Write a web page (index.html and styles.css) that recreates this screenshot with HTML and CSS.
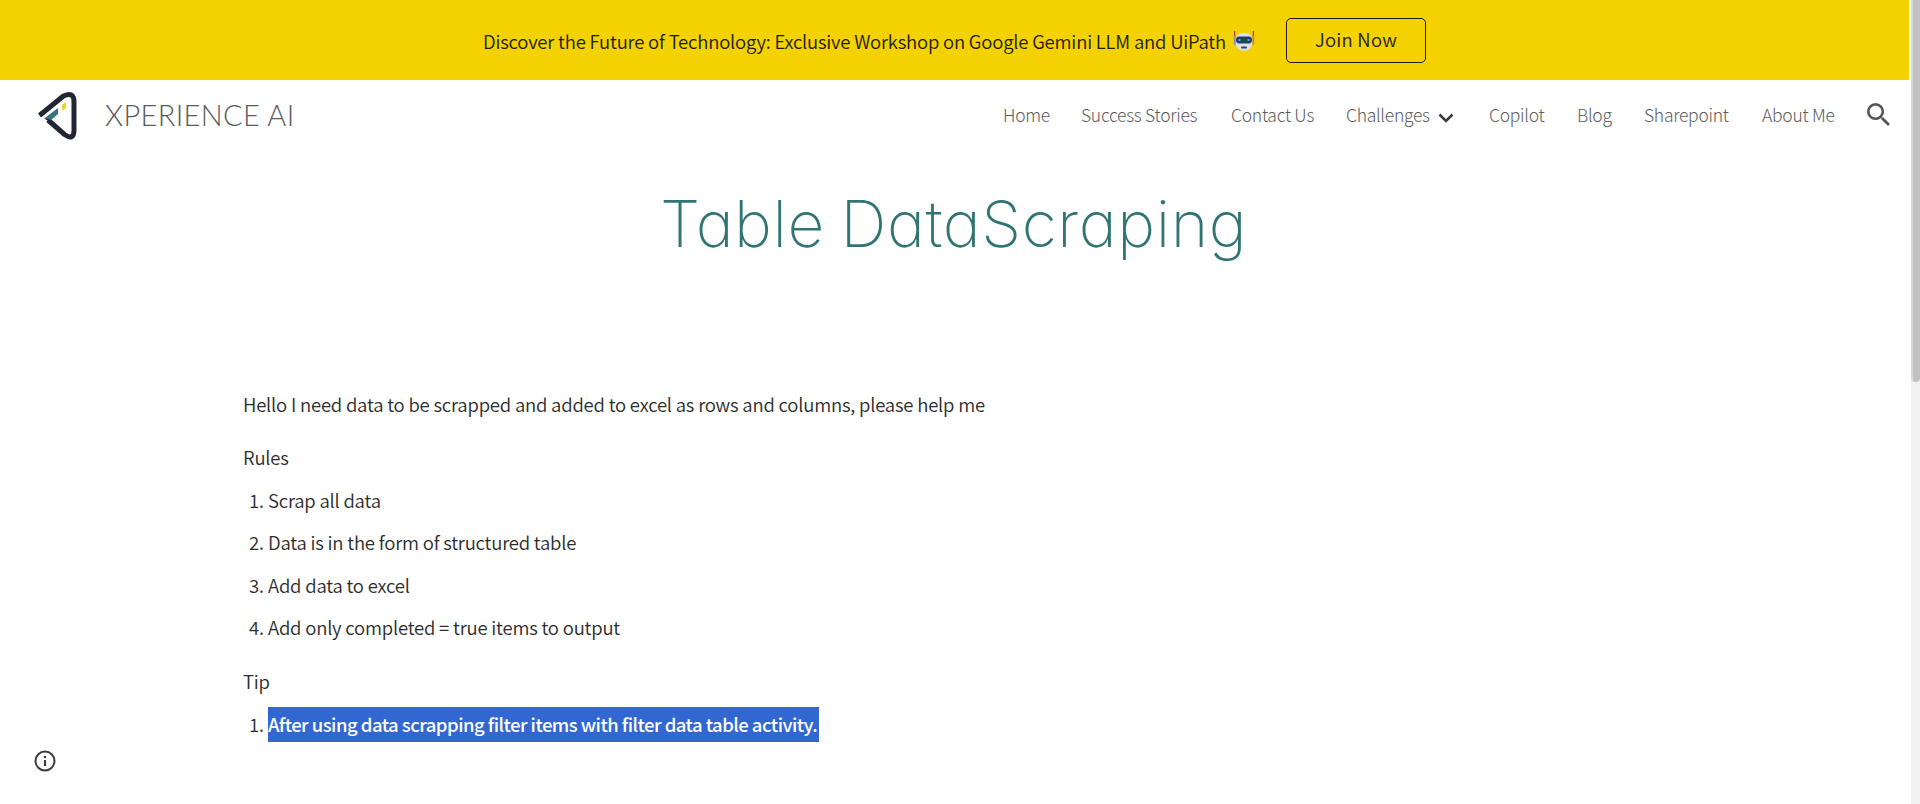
FILE: index.html
```html
<!DOCTYPE html>
<html lang="en">
<head>
<meta charset="utf-8">
<title>Table DataScraping</title>
<link rel="stylesheet" href="styles.css">
</head>
<body>
<div class="page">
  <div class="banner">
    <p class="banner-text"><span class="banner-copy">Discover the Future of Technology: Exclusive Workshop on Google Gemini LLM and UiPath</span>
      <svg class="robot" viewBox="0 0 22 22" aria-hidden="true">
        <path d="M1.6 1v14M20.4 1v14" stroke="#c43a3c" stroke-width="1.3"/>
        <path d="M1.6 6v9M20.4 6v9" stroke="#8b929b" stroke-width="1.3"/>
        <path d="M3 8Q4 3 11 3t8 5v6q0 6-8 7-8-1-8-7z" fill="#dce1e4"/>
        <rect x="3" y="6.5" width="16" height="7" rx="3.4" fill="#26377b"/>
        <rect x="6" y="7.6" width="10" height="4.8" rx="2.2" fill="#164c4a"/>
        <circle cx="6.5" cy="10" r="1.1" fill="#72a9dc"/><circle cx="15.5" cy="10" r="1.1" fill="#72a9dc"/>
        <rect x="8" y="16.5" width="6" height="2" rx="1" fill="#353e60"/>
      </svg>
    </p>
    <a class="join">Join Now</a>
  </div>
  <header class="header">
    <svg class="logo" viewBox="0 0 44 52" aria-hidden="true">
      <path d="M3.500 25.500L27.500 6q10.500-5 10.500 6v28q0 11-9.500 4.500L12 30" fill="none" stroke="#222632" stroke-width="5"/>
      <path d="M8.300 28.200L22 18v6L14 31z" fill="#35777a"/>
      <path d="M8.300 28.200L14 29.500 20 34v3z" fill="#222632"/>
      <path d="M26 15q4-4 4.200-1 .2 5-3.200 6.500-1.500-1-1-5.500z" fill="#efd323"/>
    </svg>
    <span class="site-name">XPERIENCE AI</span>
    <nav class="nav">
      <a class="n1">Home</a>
      <a class="n2">Success Stories</a>
      <a class="n3">Contact Us</a>
      <a class="n4">Challenges</a>
      <svg class="chevron" viewBox="0 0 16 10" aria-hidden="true"><path d="M1.500 1.500L8 8l6.500-6.500" fill="none" stroke="#3c3c3c" stroke-width="2.500"/></svg>
      <a class="n5">Copilot</a>
      <a class="n6">Blog</a>
      <a class="n7">Sharepoint</a>
      <a class="n8">About Me</a>
    </nav>
    <svg class="search" viewBox="3 3 17.500 17.500" aria-hidden="true"><path fill="#555" d="M15.500 14h-.79l-.28-.27A6.470 6.470 0 0 0 16 9.500 6.500 6.500 0 1 0 9.500 16c1.610 0 3.090-.59 4.230-1.570l.27.28v.79l5 4.990L20.490 19l-4.990-5zm-6 0C7.010 14 5 11.990 5 9.500S7.010 5 9.500 5 14 7.010 14 9.500 11.990 14 9.500 14z"/></svg>
  </header>
  <h1 class="title">Table DataScraping</h1>
  <main class="content">
    <p class="intro"><span class="intro-copy">Hello I need data to be scrapped and added to excel as rows and columns, please help me</span></p>
    <p class="label">Rules</p>
    <ul class="list">
      <li><span class="num">1.</span><span>Scrap all data</span></li>
      <li><span class="num">2.</span><span>Data is in the form of structured table</span></li>
      <li><span class="num">3.</span><span>Add data to excel</span></li>
      <li><span class="num">4.</span><span>Add only completed = true items to output</span></li>
    </ul>
    <p class="label">Tip</p>
    <ul class="list">
      <li><span class="num">1.</span><mark class="selected">After using data scrapping filter items with filter data table activity.</mark></li>
    </ul>
  </main>
  <svg class="info" viewBox="0 0 22 22" aria-hidden="true"><circle cx="11" cy="11" r="9.500" fill="none" stroke="#3c3c3c" stroke-width="2"/><path d="M11 10v6M11 6v2" stroke="#3c3c3c" stroke-width="2.200"/></svg>
</div>
<div class="scrollbar"><div class="thumb"></div></div>
</body>
</html>
```
FILE: styles.css
```css
* { box-sizing: border-box; }
body {
  margin: 0;
  width: 1920px;
  height: 804px;
  overflow: hidden;
  display: flex;
  background: #fff;
  color: #2c2c2c;
  font: 350 18.5px/24px "Noto Sans CJK SC", sans-serif;
  letter-spacing: -0.2px;
}
p, h1, ul { margin: 0; padding: 0; }
a, span, mark, h1 { white-space: nowrap; }
.page { width: 1909px; height: 804px; }
.banner {
  height: 80px;
  padding-left: 483px;
  display: flex;
  background: #f4d101;
  color: #211c08;
}
.banner-text { width: 803px; padding-top: 29px; display: flex; }
.banner-copy { width: 750px; letter-spacing: -0.2px; }
.robot { width: 22px; height: 22px; margin-top: 1px; }
.join {
  width: 140px;
  height: 45px;
  margin-top: 18px;
  border: 1px solid #211c08;
  border-radius: 5px;
  text-align: center;
  line-height: 41px;
  letter-spacing: 0.25px;
}
.header { height: 72px; padding-left: 36px; display: flex; }
.logo { width: 44px; height: 52px; margin-top: 10px; }
.site-name {
  width: 923px;
  padding: 17px 0 0 25px;
  font: 300 29px/36px Lato, sans-serif;
  letter-spacing: 0.35px;
  color: #5a5a5a;
}
.nav {
  width: 864px;
  padding-top: 23px;
  display: flex;
  color: #5c5c5c;
  font-size: 17.5px;
  font-weight: 300;
  letter-spacing: -0.28px;
}
.n1 { width: 78px; }
.n2 { width: 150px; }
.n3 { width: 115px; }
.n4 { width: 92px; }
.chevron { width: 16px; height: 10px; margin: 10px 35px 0 0; }
.n5 { width: 88px; }
.n6 { width: 67px; }
.n7 { width: 118px; }
.search { width: 23px; height: 23px; margin-top: 23px; }
.title {
  padding: 32px 0 0 660px;
  font: 200 64px/80px Inter, sans-serif;
  font-feature-settings: "cv11";
  letter-spacing: 0.6px;
  word-spacing: -3px;
  color: #307571;
}
.content { padding: 128px 0 0 243px; }
.intro { padding-bottom: 29px; }
.label { line-height: 24px; }
.list { list-style: none; padding-bottom: 31px; }
.list li { height: 42.300px; padding-top: 19px; display: flex; }
.num { width: 25px; padding-left: 6px; }
.selected {
  width: 551px;
  height: 35px;
  margin-top: -5px;
  line-height: 35px;
  background: #3267d1;
  color: #fff;
  font-weight: 500;
  letter-spacing: -0.52px;
}
.info { position: absolute; left: 34px; top: 750px; width: 22px; height: 22px; }
.scrollbar { width: 11px; height: 804px; background: #f1f1f1; border-left: 2px solid #fff; }
.thumb { width: 9px; height: 382px; background: #c1c1c1; border-left: 2px solid #d8d8d8; border-radius: 0 0 4px 4px; }
```
